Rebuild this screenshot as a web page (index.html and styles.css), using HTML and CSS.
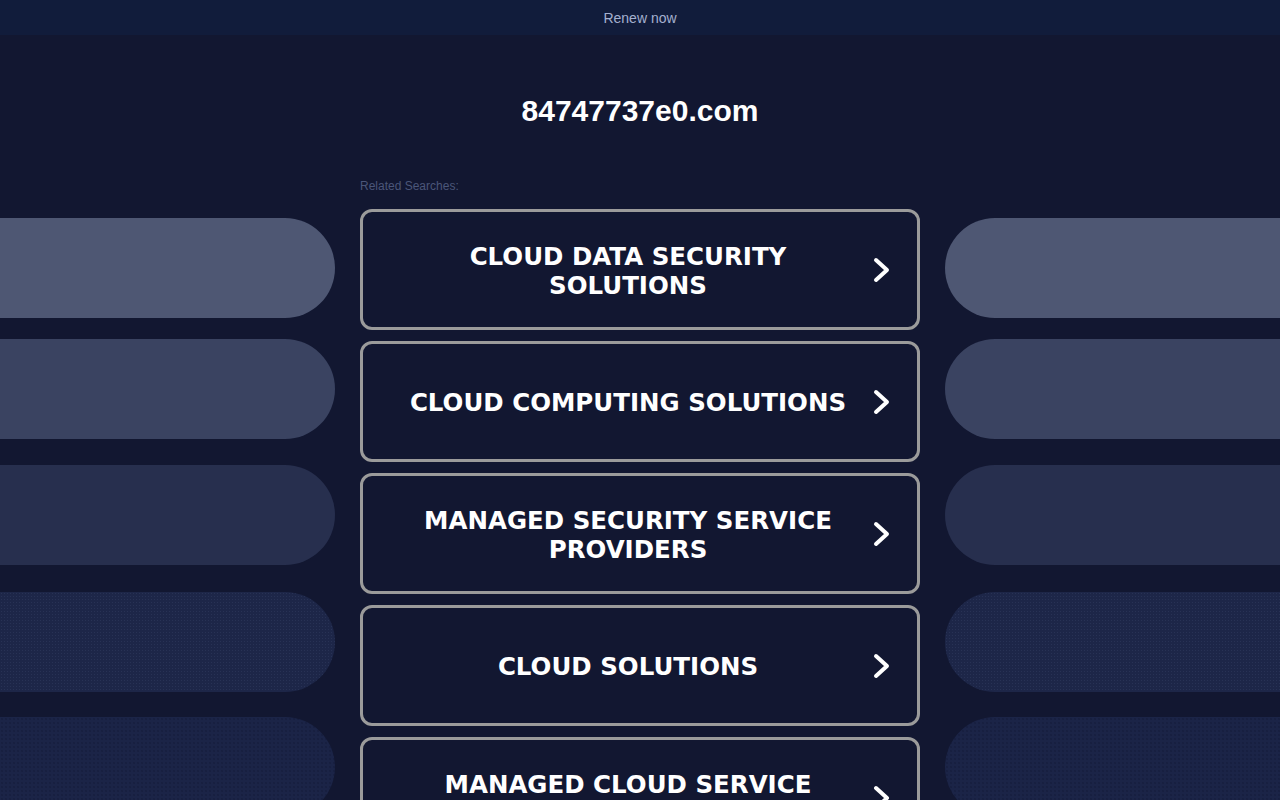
FILE: index.html
```html
<!DOCTYPE html>
<html lang="en">

<head>
    <meta charset="UTF-8">
    <meta name="viewport" content="width=device-width, initial-scale=1.0">
    <title>84747737e0.com</title>
    <link rel="stylesheet" href="styles.css">
</head>

<body>
    <div class="topbar">
        <a href="#" class="renew">Renew now</a>
    </div>
    <div class="main">
        <h1 class="domain">84747737e0.com</h1>
        <div class="layout">
            <div class="side side-left">
                <span class="pill"></span>
                <span class="pill"></span>
                <span class="pill"></span>
                <span class="pill"></span>
                <span class="pill"></span>
            </div>
            <div class="center">
                <div class="related">Related Searches:</div>
                <ul class="links">
                    <li><a href="#"><span>CLOUD DATA SECURITY SOLUTIONS</span><svg class="arrow" viewBox="0 0 18 26"><polyline points="3,3 14,13 3,23" /></svg></a></li>
                    <li><a href="#"><span>CLOUD COMPUTING SOLUTIONS</span><svg class="arrow" viewBox="0 0 18 26"><polyline points="3,3 14,13 3,23" /></svg></a></li>
                    <li><a href="#"><span>MANAGED SECURITY SERVICE PROVIDERS</span><svg class="arrow" viewBox="0 0 18 26"><polyline points="3,3 14,13 3,23" /></svg></a></li>
                    <li><a href="#"><span>CLOUD SOLUTIONS</span><svg class="arrow" viewBox="0 0 18 26"><polyline points="3,3 14,13 3,23" /></svg></a></li>
                    <li><a href="#"><span>MANAGED CLOUD SERVICE PROVIDERS</span><svg class="arrow" viewBox="0 0 18 26"><polyline points="3,3 14,13 3,23" /></svg></a></li>
                </ul>
            </div>
            <div class="side side-right">
                <span class="pill"></span>
                <span class="pill"></span>
                <span class="pill"></span>
                <span class="pill"></span>
                <span class="pill"></span>
            </div>
        </div>
    </div>
</body>

</html>
```

FILE: styles.css
```css
html,
body {
    margin: 0px;
    height: 100%;
}

body {
    background: #121731;
    font-family: "Liberation Sans", Arial, sans-serif;
    overflow: hidden;
}

.topbar {
    height: 35px;
    line-height: 36px;
    background: #111c3b;
    text-align: center;
}

.renew {
    color: #a4b0cf;
    font-size: 14px;
    text-decoration: none;
}

.domain {
    margin: 58px 0 0;
    height: 36px;
    line-height: 36px;
    text-align: center;
    color: #fff;
    font-size: 30px;
    font-weight: bold;
}

.layout {
    display: grid;
    grid-template-columns: 1fr 560px 1fr;
    column-gap: 25px;
    margin-top: 50px;
}

.related {
    font-size: 12px;
    color: #4b5679;
    line-height: 14px;
    margin-bottom: 16px;
}

.links {
    list-style: none;
    margin: 0;
    padding: 0;
}

.links li {
    margin-bottom: 11px;
}

.links a {
    display: flex;
    align-items: center;
    height: 115px;
    border: 3px solid #9b9b9b;
    border-radius: 12px;
    padding: 0 26px 0 20px;
    text-decoration: none;
    color: #fff;
}

.links span {
    flex: 1;
    text-align: center;
    font-family: "DejaVu Sans", Verdana, sans-serif;
    font-weight: bold;
    font-size: 24.5px;
    line-height: 29px;
    padding: 2px 13px 0 13px;
}

.arrow {
    display: block;
    width: 18px;
    height: 26px;
    fill: none;
    stroke: #fff;
    stroke-width: 4;
    stroke-linecap: round;
    stroke-linejoin: round;
}

/* decorative pills at the sides */
.side {
    display: flex;
    flex-direction: column;
    padding-top: 39px;
}

.pill {
    display: block;
    height: 100px;
}

.side-left .pill {
    border-radius: 0 50px 50px 0;
}

.side-right .pill {
    border-radius: 50px 0 0 50px;
}

.pill:nth-child(1) {
    background: #4e5773;
}

.pill:nth-child(2) {
    margin-top: 21px;
    background: #3a4361;
}

.pill:nth-child(3) {
    margin-top: 26px;
    background: #272f4e;
}

.pill:nth-child(4) {
    margin-top: 27px;
    background: #1d2648;
    background-image: radial-gradient(rgba(60, 72, 110, 0.35) 0.6px, transparent 0.8px);
    background-size: 3px 3px;
}

.pill:nth-child(5) {
    margin-top: 25px;
    background: #1b2447;
    background-image: radial-gradient(rgba(10, 16, 40, 0.5) 0.6px, transparent 0.8px);
    background-size: 4px 4px;
}
```
